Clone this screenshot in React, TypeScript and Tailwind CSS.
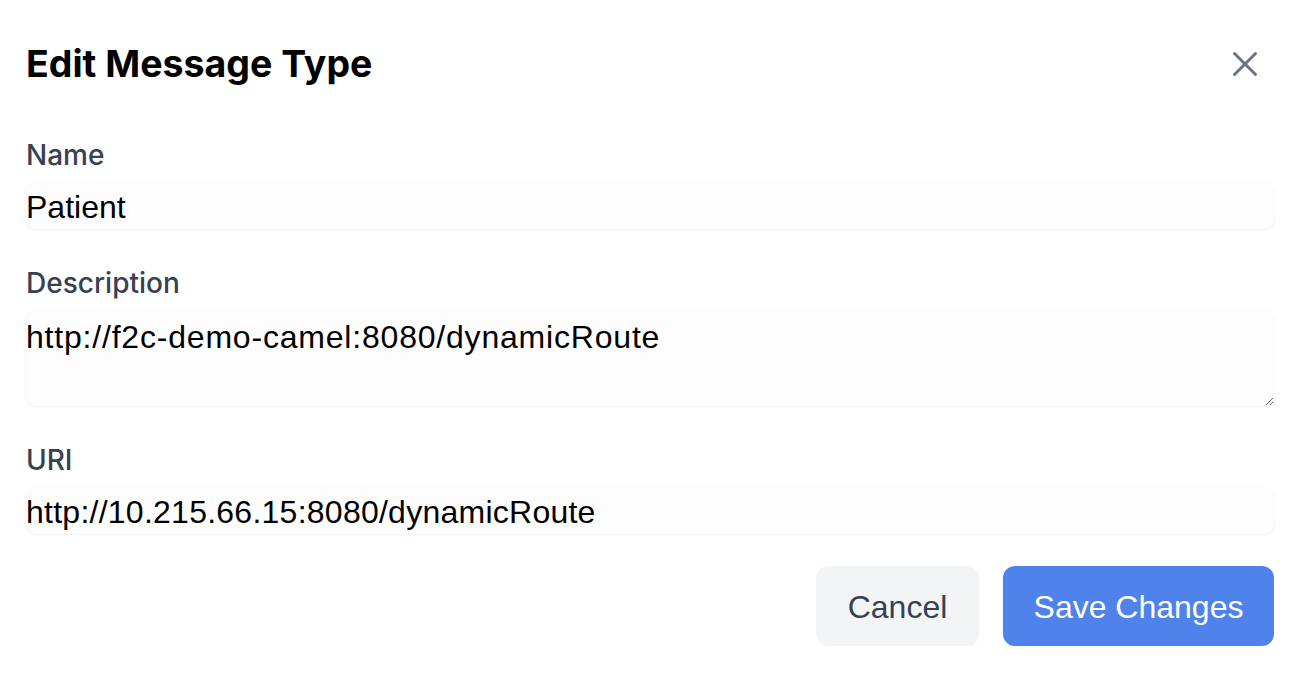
import React from "react";

export default function App() {
  const inter = { fontFamily: "Inter, 'Noto Sans', sans-serif" };
  return (
    <div className="w-full h-[676px] bg-white flex flex-col pl-[26px] pr-[28px] pt-[40px]">
      <div className="flex items-center justify-between h-[48px]">
        <h1 className="text-[37.5px] leading-[48px] font-bold text-black" style={inter}>
          Edit Message Type
        </h1>
        <button className="w-[42px] h-[42px] mr-[8px] flex items-center justify-center text-[#6b7280]">
          <svg width="42" height="42" viewBox="0 0 24 24" fill="none" stroke="currentColor" strokeWidth="1.7" strokeLinecap="round">
            <path d="M6 6l12 12M18 6L6 18" />
          </svg>
        </button>
      </div>

      <div className="flex flex-col mt-[47px] gap-[34px] font-['Liberation_Sans',Arial,sans-serif]">
        <div className="flex flex-col">
          <label className="text-[28px] leading-[40px] font-medium text-[#374151]" style={inter}>
            Name
          </label>
          <input
            className="mt-[7px] h-[47px] w-full px-0 pt-[4px] text-[32px] leading-[43px] text-black bg-[#fdfdfd] rounded-[10px] shadow-[0_1px_3px_rgba(0,0,0,0.07)] outline-none"
            defaultValue="Patient"
          />
        </div>
        <div className="flex flex-col">
          <label className="text-[28px] leading-[40px] font-medium text-[#374151]" style={inter}>
            Description
          </label>
          <textarea
            rows={2}
            className="mt-[7px] h-[96px] w-full px-0 pt-[3px] pb-0 text-[32px] leading-[48px] tracking-[0.8px] text-black bg-[#fdfdfd] rounded-[10px] shadow-[0_1px_3px_rgba(0,0,0,0.07)] outline-none resize-y"
            defaultValue="http://f2c-demo-camel:8080/dynamicRoute"
          />
        </div>
        <div className="flex flex-col">
          <label className="text-[28px] leading-[40px] font-medium text-[#374151]" style={inter}>
            URI
          </label>
          <input
            className="mt-[7px] h-[47px] w-full px-0 pt-[4px] text-[32px] leading-[43px] tracking-[0.25px] text-black bg-[#fdfdfd] rounded-[10px] shadow-[0_1px_3px_rgba(0,0,0,0.07)] outline-none"
            defaultValue="http://10.215.66.15:8080/dynamicRoute"
          />
        </div>
      </div>

      <div className="flex justify-end gap-[24px] mt-[32px] font-['Liberation_Sans',Arial,sans-serif]">
        <button className="w-[163px] h-[80px] pt-[2px] rounded-[12px] bg-[#f3f4f6] text-[#374151] text-[32px]">
          Cancel
        </button>
        <button className="w-[271px] h-[80px] pt-[2px] rounded-[12px] bg-[#4f83eb] text-white text-[32px]">
          Save Changes
        </button>
      </div>
    </div>
  );
}
